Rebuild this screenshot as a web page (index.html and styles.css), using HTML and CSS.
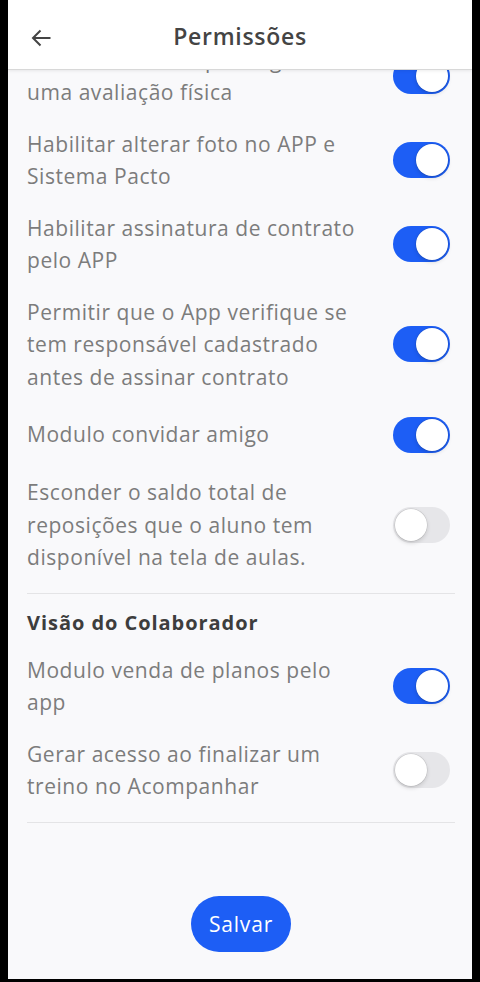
FILE: index.html
```html
<!DOCTYPE html>
<html lang="pt-BR">

<head>
    <meta charset="utf-8">
    <meta name="viewport" content="width=device-width, initial-scale=1">
    <title>Permissões</title>
    <link rel="stylesheet" href="styles.css">
</head>

<body>
    <div class="phone">
        <header class="app-bar">
            <button class="back" aria-label="Voltar">
                <svg width="20" height="18" viewBox="0 0 20 18" fill="none" stroke="#444" stroke-width="2">
                    <path d="M19.5 9H2" />
                    <path d="M9.5 1.5L2 9l7.5 7.5" />
                </svg>
            </button>
            <h1 class="title">Permissões</h1>
            <span></span>
        </header>

        <main class="content">
            <div class="list list-top">
                <div class="row">
                    <span class="label">Habilitar o aluno para agendar uma avaliação física</span>
                    <span class="switch on"><span class="knob"></span></span>
                </div>
                <div class="row">
                    <span class="label">Habilitar alterar foto no APP e Sistema Pacto</span>
                    <span class="switch on"><span class="knob"></span></span>
                </div>
                <div class="row">
                    <span class="label">Habilitar assinatura de contrato pelo APP</span>
                    <span class="switch on"><span class="knob"></span></span>
                </div>
                <div class="row">
                    <span class="label">Permitir que o App verifique se tem responsável cadastrado antes de assinar contrato</span>
                    <span class="switch on"><span class="knob"></span></span>
                </div>
                <div class="row">
                    <span class="label">Modulo convidar amigo</span>
                    <span class="switch on"><span class="knob"></span></span>
                </div>
                <div class="row">
                    <span class="label">Esconder o saldo total de reposições que o aluno tem disponível na tela de aulas.</span>
                    <span class="switch"><span class="knob"></span></span>
                </div>
            </div>
            <hr class="divider">

            <h2 class="section-title">Visão do Colaborador</h2>
            <div class="list">
                <div class="row">
                    <span class="label">Modulo venda de planos pelo app</span>
                    <span class="switch on"><span class="knob"></span></span>
                </div>
                <div class="row">
                    <span class="label">Gerar acesso ao finalizar um treino no Acompanhar</span>
                    <span class="switch"><span class="knob"></span></span>
                </div>
            </div>
            <hr class="divider">

            <div class="actions">
                <button class="save">Salvar</button>
            </div>
        </main>
    </div>
</body>

</html>
```

FILE: styles.css
```css
body {
    margin: 0;
    background-color: #000;
    font-family: "Open Sans", Arial, sans-serif;
}

.phone {
    margin-left: 8px;
    width: 464px;
    height: 979px;
    background-color: #f9f9fb;
    display: flex;
    flex-direction: column;
    overflow: hidden;
}

.app-bar {
    flex-shrink: 0;
    height: 66px;
    padding-top: 3px;
    background-color: #fff;
    border-bottom: 1px solid #d8d8d8;
    box-shadow: 0 1px 3px rgba(0, 0, 0, 0.08);
    display: grid;
    grid-template-columns: 64px 1fr 64px;
    align-items: center;
    position: relative;
    z-index: 1;
}

.back {
    border: none;
    background: none;
    padding: 3px 0 0 23px;
    display: flex;
    align-items: center;
    cursor: pointer;
}

.title {
    margin: 0;
    text-align: center;
    font-size: 23px;
    line-height: 30px;
    letter-spacing: 0.7px;
    font-weight: 600;
    color: #444;
}

.content {
    flex: 1;
    display: flex;
    flex-direction: column;
    padding: 0 17px 27px 19px;
    overflow: hidden;
}

.list-top {
    margin-top: -36px;
}

.row {
    display: flex;
    align-items: center;
    gap: 26px;
    padding: 9.5px 0;
}

.label {
    flex: 1;
    font-size: 21px;
    line-height: 32.5px;
    letter-spacing: 0.55px;
    color: #7c7c7c;
}

.switch {
    flex-shrink: 0;
    box-sizing: border-box;
    width: 57px;
    height: 36px;
    margin: 4.5px 5px 4.5px 0;
    padding: 2px;
    border-radius: 18px;
    background-color: #e6e6e9;
    display: flex;
    align-items: center;
}

.switch.on {
    background-color: #1d5ef5;
    justify-content: flex-end;
}

.knob {
    width: 32px;
    height: 32px;
    border-radius: 50%;
    background-color: #fff;
    box-shadow: 0 0 0 0.5px rgba(0, 0, 0, 0.12), 0 2px 4px rgba(0, 0, 0, 0.15);
}

.divider {
    margin: 10px 0 0;
    border: none;
    border-top: 1px solid #e4e4e6;
}

.section-title {
    margin: 14px 0 6px;
    font-size: 20px;
    line-height: 30px;
    letter-spacing: 0.95px;
    font-weight: 700;
    color: #3d3d3d;
}

.actions {
    margin-top: auto;
    display: flex;
    justify-content: center;
}

.save {
    width: 100px;
    height: 56px;
    border: none;
    border-radius: 28px;
    background-color: #1d5ef5;
    color: #fff;
    font-family: "Open Sans", Arial, sans-serif;
    font-size: 21px;
    letter-spacing: 0.8px;
    font-weight: 500;
    cursor: pointer;
}
```
